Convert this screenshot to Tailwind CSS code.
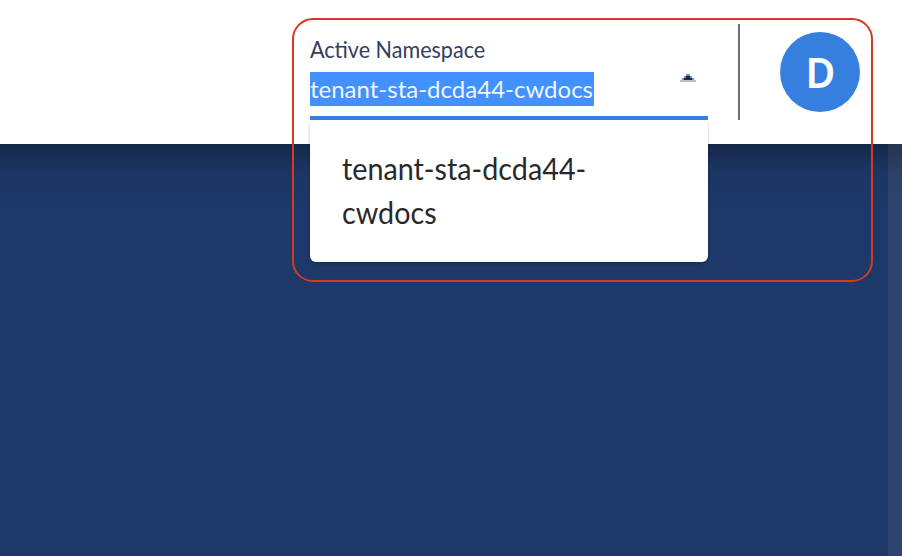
<!DOCTYPE html>
<html lang="en">
<head>
<meta charset="utf-8">
<title>Active Namespace</title>
<script src="https://cdn.jsdelivr.net/npm/@tailwindcss/browser@4"></script>
</head>
<body class="relative flex h-[556px] w-[902px] flex-col overflow-hidden bg-[#1d3969] font-['Lato','Open_Sans',sans-serif]">
  <header class="relative z-10 flex h-36 shrink-0 items-start bg-white pl-[310px]">
    <div class="relative mt-9 h-[84px] w-[398px] border-b-4 border-[#377fdf]">
      <label class="block h-9 text-[23px] leading-[27px] whitespace-nowrap text-[#353d60]"><span class="inline-block origin-left scale-x-[0.937]">Active Namespace</span></label>
      <div class="flex h-[34px] w-[284px] items-center bg-[#4391ff] text-[24px] whitespace-nowrap text-[#eef5ff]"><span>tenant-sta-dcda44-cwdocs</span></div>
      <svg class="absolute top-[38px] left-[370px] h-2 w-4" viewBox="0 0 16 8" shape-rendering="crispEdges"><path d="M0 6h16v2H0z" fill="#bcc0cd"/><path d="M2 4h12v2H2zM4 2h8v2H4zM6 0h4v2H6z" fill="#8590a8"/><path d="M4 4h8v2H4zM6 2h4v2H6z" fill="#172b50"/></svg>
      <div class="absolute top-[84px] left-0 h-[142px] w-[398px] rounded-md bg-white px-8 pt-[26px] text-[30px] leading-[44px] text-[#292929] shadow-[0_1px_3px_rgba(0,0,0,0.25)]">
        <div class="origin-left scale-x-[0.958] whitespace-nowrap">tenant-sta-dcda44-<br>cwdocs</div>
      </div>
    </div>
    <div class="mt-6 ml-[30px] h-24 w-0.5 bg-[#6b7080]"></div>
    <div class="mt-8 ml-10 flex size-20 items-center justify-center rounded-full bg-[#377fdf] font-['Noto_Sans',sans-serif] text-[42px] leading-none font-semibold text-white"><span class="inline-block scale-x-[0.97]">D</span></div>
  </header>
  <main class="flex flex-1 justify-end bg-linear-to-b from-[#162849] via-[#1c3563] via-[28px] to-[#1d3969] to-[64px]">
    <div class="w-3.5 bg-[#ffe9b0]/7"></div>
  </main>
  <div class="pointer-events-none absolute top-[18px] left-[292px] z-20 h-[264px] w-[581px] rounded-[21px] border-2 border-[#d43a23]"></div>
</body>
</html>
